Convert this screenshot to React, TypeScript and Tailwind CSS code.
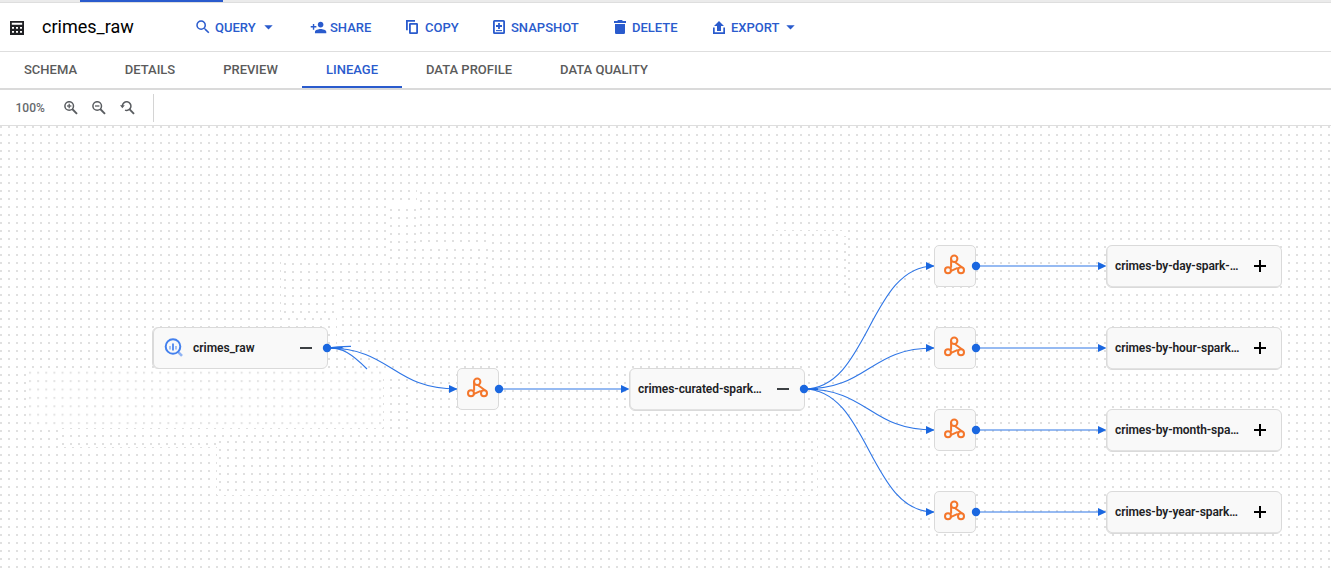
import type { ReactNode } from 'react';
import { MdPersonAdd, MdSearch } from 'react-icons/md';

const tabs = [
  { label: 'SCHEMA', width: 'w-[101px]' },
  { label: 'DETAILS', width: 'w-[98px]' },
  { label: 'PREVIEW', width: 'w-[103px]' },
  { label: 'LINEAGE', width: 'w-[100px]', active: true },
  { label: 'DATA PROFILE', width: 'w-[134px]' },
  { label: 'DATA QUALITY', width: 'w-[136px]' },
];

function TableIcon() {
  return (
    <svg width="14" height="14" viewBox="0 0 14 14" className="mt-[2px] shrink-0">
      <path fill="#202124" fillRule="evenodd" d="M0 0h14v14H0zM1.800 1.800v2h10.400v-2zM2 6v1.800h2V6zM6 6v1.800h2V6zM10 6v1.800h2V6zM2 10v1.800h2V10zM6 10v1.800h2V10zM10 10v1.800h2V10z" />
    </svg>
  );
}

function CopyIcon() {
  return (
    <svg width="12" height="14" viewBox="0 0 12 14" fill="none" stroke="currentColor" strokeWidth="1.8">
      <path d="M.9 10.200V.9H9" />
      <rect x="3.900" y="3.900" width="7.200" height="9.200" rx=".4" />
    </svg>
  );
}

function SnapshotIcon() {
  return (
    <svg width="12" height="14" viewBox="0 0 12 14" fill="none" stroke="currentColor">
      <rect x=".9" y=".9" width="10.2" height="12.2" rx=".6" strokeWidth="1.8" />
      <path d="M6 3v6M3 6h6" strokeWidth="1.8" />
      <path d="M3 10.6h6" strokeWidth="1.1" />
    </svg>
  );
}

function TrashIcon() {
  return (
    <svg width="12" height="14" viewBox="0 0 12 14" fill="currentColor">
      <path d="M0 1h3.2L4 0h4l.8 1H12v2H0zM1 4h10v8.4c0 1-.6 1.6-1.6 1.6H2.6C1.6 14 1 13.400 1 12.400z" />
    </svg>
  );
}

function ExportIcon() {
  return (
    <svg width="12" height="13" viewBox="0 0 12 13" fill="currentColor">
      <path d="M6 0l5 5H8v5H4V5H1z" />
      <path d="M0 6.500h1.700v4.800h8.600V6.500H12V13H0z" />
    </svg>
  );
}

function ZoomIcon({ kind }: { kind: 'in' | 'out' | 'reset' }) {
  return (
    <svg width="15" height="14" viewBox="0 0 15 14" fill="none" stroke="#5a5d61" strokeWidth="1.5">
      {kind === 'reset' ? (
        <>
          <path d="M2.300 5A4.300 4.300 0 1 1 5 9.100" />
          <path d="M0 4.300h4.800L2.400 7.200z" fill="#5a5d61" stroke="none" />
        </>
      ) : (
        <circle cx="5.200" cy="5" r="4.300" />
      )}
      <path d={kind === 'reset' ? 'M9.400 8.100L14 12.800' : 'M8.200 8L13 12.800'} strokeWidth="1.900" />
      {kind !== 'reset' && <path d="M3 5h4.400" strokeWidth="1.300" />}
      {kind === 'in' && <path d="M5.200 2.800v4.400" strokeWidth="1.300" />}
    </svg>
  );
}

function Caret({ className }: { className: string }) {
  return (
    <svg width="9" height="5" viewBox="0 0 9 5" fill="currentColor" className={`shrink-0 ${className}`}>
      <path d="M.3 .3h8.400L4.500 4.600z" />
    </svg>
  );
}

function Action({ icon, label, caret, className }: { icon: ReactNode; label: string; caret?: ReactNode; className: string }) {
  return (
    <button className={`flex h-full items-center text-[13px] font-medium text-[#2a5bcd] ${className}`}>
      {icon}
      <span className="pt-[2px] whitespace-nowrap">{label}</span>
      {caret}
    </button>
  );
}

type Patch = { x: number; y: number; r: number; b: number; ox: number; oy: number; pw?: number; ph?: number; fill?: string };

// Tiles of the dotted canvas; each tile carries its own grid origin.
const patches: Patch[] = [
  { x: 0, y: 126, r: 1331, b: 571, ox: 0, oy: 126 },
  { x: 387, y: 204, r: 492, b: 260, ox: 390, oy: 209 },
  { x: 417, y: 187, r: 772, b: 245, ox: 420, oy: 192 },
  { x: 281, y: 259, r: 491, b: 316, ox: 284, oy: 263 },
  { x: 691, y: 236, r: 848, b: 296, ox: 692, oy: 243 },
  { x: 491, y: 231, r: 842, b: 289, ox: 492, oy: 234 },
  { x: 337, y: 289, r: 692, b: 345, ox: 342, oy: 292 },
  { x: 60, y: 374, r: 410, b: 447, ox: 62, oy: 379 },
  { x: 27, y: 371, r: 383, b: 428, ox: 29, oy: 371.700, pw: 8.140, ph: 8.400, fill: '#e4e4e4' },
  { x: 217, y: 438, r: 817, b: 495, ox: 219, oy: 441 },
];

function DotGrid() {
  return (
    <>
      <defs>
        {patches.map((p, i) => (
          <pattern key={i} id={`dots-${i}`} x={p.ox} y={p.oy} width={p.pw ?? 8} height={p.ph ?? 8} patternUnits="userSpaceOnUse">
            <rect width="2" height="2" fill={p.fill ?? '#e0e0e0'} />
          </pattern>
        ))}
      </defs>
      {patches.map((p, i) => (
        <g key={i}>
          <rect x={p.x} y={p.y} width={p.r - p.x} height={p.b - p.y} fill="#fff" />
          <rect x={p.x} y={p.y} width={p.r - p.x} height={p.b - p.y} fill={`url(#dots-${i})`} />
        </g>
      ))}
    </>
  );
}

const rows = [266, 348, 430, 512];

function Arrow({ x, y }: { x: number; y: number }) {
  return <path d={`M${x} ${y}l-8.500 -4v8z`} fill="#1a67e0" />;
}

function Edges() {
  return (
    <>
      <g fill="none" stroke="#2f76e6" strokeWidth="1.100">
        <path d="M327 348C392 348 392 389 457 389" />
        <path d="M327 348C342 347 352 354 367 369" />
        <path d="M327 348Q338 346.300 351 346.400" />
        {rows.map((y) => (
          <path key={y} d={`M804 389C869 389 869 ${y} 934 ${y}`} />
        ))}
      </g>
      <g stroke="#2f76e6" strokeWidth="1.200">
        <path d="M499 389H624" />
        {rows.map((y) => (
          <path key={y} d={`M976 ${y}H1100`} />
        ))}
      </g>
      <path d="M327 347.500L342 347L344 348.600L327 348.700zM804 388.400L818 388.200V390L804 389.600z" fill="#1a67e0" />
      <Arrow x={457.500} y={389} />
      <Arrow x={629.500} y={389} />
      {rows.map((y) => (
        <g key={y}>
          <Arrow x={934.500} y={y} />
          <Arrow x={1106.500} y={y} />
        </g>
      ))}
    </>
  );
}

function Ports() {
  const ports = [[327, 348], [499, 389], [804, 389], ...rows.map((y) => [976, y])];
  return (
    <svg className="absolute inset-0" width="1331" height="445" viewBox="0 126 1331 445" fill="#1a67e0">
      {ports.map(([x, y]) => (
        <circle key={`${x}-${y}`} cx={x} cy={y} r="4.200" />
      ))}
    </svg>
  );
}

function ProcessNode({ className }: { className: string }) {
  return (
    <div className={`absolute size-[42px] rounded-[5px] border border-[#dadada] bg-[#f9f9f9] ${className}`}>
      <svg width="40" height="40" viewBox="1 1 40 40" fill="none" stroke="#f4762b" strokeWidth="2">
        <circle cx="20.200" cy="13.700" r="3.200" />
        <circle cx="14" cy="25.300" r="3" />
        <circle cx="27" cy="25.300" r="3" />
        <path d="M17.100 13.500V22.800M20.800 17L28 22.300M16 26.400L23.800 22.900" />
      </svg>
    </div>
  );
}

function DataNode({ label, expanded, source, className }: { label: string; expanded?: boolean; source?: boolean; className: string }) {
  return (
    <div
      className={`absolute flex w-[176px] items-center rounded-[6px] border border-[#dadada] bg-[#f9f9f9] ${
        source ? 'h-[42px] shadow-[inset_1px_0_0_0_#dadada]' : 'h-[43px] pb-px shadow-[inset_0.5px_-0.7px_0_0_#dadada]'
      } ${className}`}
    >
      {source && (
        <svg width="20" height="20" viewBox="0 0 20 20" className="ml-[11px] shrink-0" fill="none">
          <path d="M14 13.800L18 17.800" stroke="#8fb3f4" strokeWidth="2.600" />
          <circle cx="9" cy="8.500" r="7.300" stroke="#4380ee" strokeWidth="2" />
          <path d="M6 8v3.500M12 8v3.500" stroke="#8fb3f4" strokeWidth="1.600" />
          <path d="M9 5.500v7" stroke="#4380ee" strokeWidth="1.700" />
        </svg>
      )}
      <span className={`whitespace-nowrap text-xs font-semibold text-[#202124] ${source ? 'ml-[9px]' : 'ml-2 tracking-[-0.07px]'}`}>{label}</span>
      <svg width="14" height="14" viewBox="0 0 14 14" className="mr-[14px] ml-auto shrink-0" stroke={expanded ? '#3c4043' : '#000'} strokeWidth="2">
        <path d="M1 7h12" />
        {!expanded && <path d="M7 1v12" />}
      </svg>
    </div>
  );
}

export default function App() {
  return (
    <div className="flex h-[571px] w-[1331px] flex-col overflow-hidden bg-white font-['Roboto',sans-serif]">
      <div className="h-[3px] shrink-0 border-b border-[#dedede] bg-[#ebebeb] pl-20">
        <div className="h-[2px] w-[143px] bg-[#2a5bcd]" />
      </div>
      <header className="flex h-[49px] shrink-0 items-center border-b border-[#dedede] pl-[10px]">
        <TableIcon />
        <h1 className="ml-[18px] w-[152px] text-lg text-black">crimes_raw</h1>
        <Action className="w-[116px] gap-[3px]" icon={<MdSearch className="size-[18px] shrink-0" />} label="QUERY" caret={<Caret className="ml-[5px]" />} />
        <Action className="w-24 gap-[3px]" icon={<MdPersonAdd className="size-[17px] shrink-0" />} label="SHARE" />
        <Action className="w-[87px] gap-[7px]" icon={<CopyIcon />} label="COPY" />
        <Action className="w-[121px] gap-[6px]" icon={<SnapshotIcon />} label="SNAPSHOT" />
        <Action className="w-[99px] gap-[6px]" icon={<TrashIcon />} label="DELETE" />
        <Action className="gap-[6px]" icon={<ExportIcon />} label="EXPORT" caret={<Caret className="ml-px" />} />
      </header>
      <nav className="flex h-[38px] shrink-0 border-b-2 border-[#dadada]">
        {tabs.map((t) => (
          <button
            key={t.label}
            className={`flex h-9 items-center justify-center border-b-2 pt-[2px] text-[13px] font-medium whitespace-nowrap ${t.width} ${
              t.active ? 'border-[#2a5bcd] text-[#2a5bcd]' : 'border-transparent text-[#5b5b5b]'
            }`}
          >
            {t.label}
          </button>
        ))}
      </nav>
      <div className="flex h-9 shrink-0 items-center border-b border-[#dedede] pl-[15.500px]">
        <span className="w-[48.500px] text-xs font-medium text-[#66696d]">100%</span>
        <div className="flex gap-[13px]">
          <ZoomIcon kind="in" />
          <ZoomIcon kind="out" />
          <ZoomIcon kind="reset" />
        </div>
        <div className="ml-[18px] h-7 w-px bg-[#d4d4d4]" />
      </div>
      <main className="relative h-[445px]">
        <svg className="absolute inset-0" width="1331" height="445" viewBox="0 126 1331 445">
          <DotGrid />
          <Edges />
        </svg>
        <DataNode source expanded label="crimes_raw" className="top-[201px] left-[152px]" />
        <ProcessNode className="top-[242px] left-[457px]" />
        <DataNode expanded label="crimes-curated-spark…" className="top-[242px] left-[629px]" />
        <ProcessNode className="top-[119px] left-[934px]" />
        <ProcessNode className="top-[201px] left-[934px]" />
        <ProcessNode className="top-[283px] left-[934px]" />
        <ProcessNode className="top-[365px] left-[934px]" />
        <DataNode label="crimes-by-day-spark-…" className="top-[119px] left-[1106px]" />
        <DataNode label="crimes-by-hour-spark…" className="top-[201px] left-[1106px]" />
        <DataNode label="crimes-by-month-spa…" className="top-[283px] left-[1106px]" />
        <DataNode label="crimes-by-year-spark…" className="top-[365px] left-[1106px]" />
        <Ports />
      </main>
    </div>
  );
}
